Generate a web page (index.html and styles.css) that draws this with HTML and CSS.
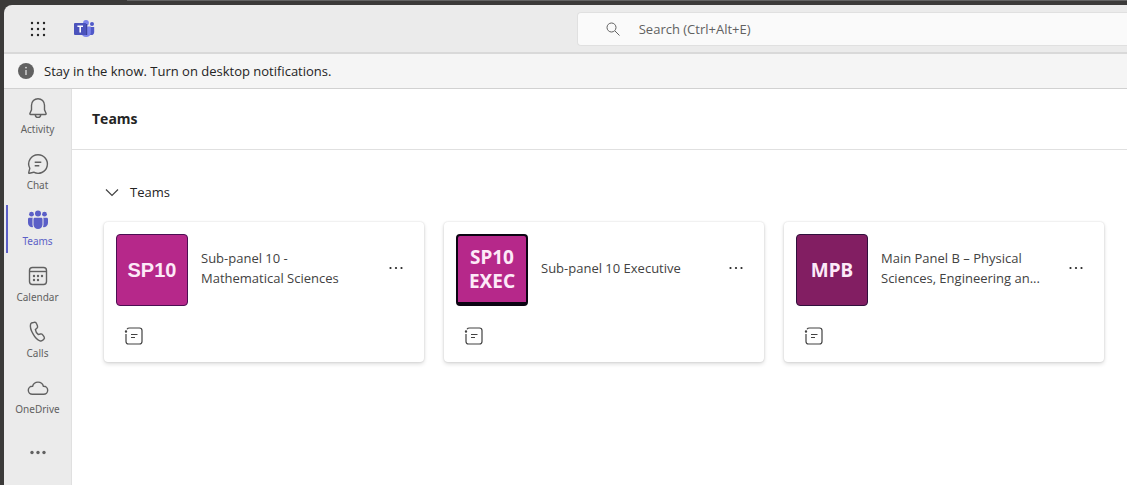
FILE: index.html
```html
<!DOCTYPE html>
<html lang="en">

<head>
    <meta charset="UTF-8">
    <meta name="viewport" content="width=device-width, initial-scale=1.0">
    <title>Teams</title>
    <link rel="stylesheet" href="styles.css">
</head>

<body>
    <!-- shared icons -->
    <svg class="sprite" aria-hidden="true">
        <symbol id="icon-more" viewBox="0 0 20 20">
            <circle cx="4.500" cy="10" r="1.100"/>
            <circle cx="10" cy="10" r="1.100"/>
            <circle cx="15.500" cy="10" r="1.100"/>
        </symbol>
        <symbol id="icon-more-bold" viewBox="0 0 20 20">
            <circle cx="4" cy="9.500" r="1.700"/>
            <circle cx="10" cy="9.500" r="1.700"/>
            <circle cx="16" cy="9.500" r="1.700"/>
        </symbol>
        <symbol id="icon-channel" viewBox="0 0 20 20">
            <path d="M5.500 2h10a2.500 2.500 0 0 1 2.500 2.500v11a2.500 2.500 0 0 1-2.500 2.500h-11A2.500 2.500 0 0 1 2 15.500V8M3 3.200c.5-.8 1.400-1.200 2.500-1.200M7 8.500h6.500M7 11.500h4"/>
            <circle cx="2" cy="5.500" r=".6"/>
        </symbol>
    </svg>

    <div class="app">
        <header class="topbar">
            <div class="brand">
                <button class="icon-btn" type="button" aria-label="App launcher">
                    <svg class="waffle" width="20" height="20" viewBox="0 0 20 20">
                        <circle cx="4" cy="4" r="1.200"/><circle cx="10" cy="4" r="1.200"/><circle cx="16" cy="4" r="1.200"/>
                        <circle cx="4" cy="10" r="1.200"/><circle cx="10" cy="10" r="1.200"/><circle cx="16" cy="10" r="1.200"/>
                        <circle cx="4" cy="16" r="1.200"/><circle cx="10" cy="16" r="1.200"/><circle cx="16" cy="16" r="1.200"/>
                    </svg>
                </button>
                <svg class="logo" width="22" height="20" viewBox="0 0 22 20">
                    <circle cx="18" cy="5" r="2" fill="#5059c9"/>
                    <path d="M14 8h6.200v5a3.100 3.100 0 0 1-6.200 0z" fill="#5059c9"/>
                    <circle cx="12" cy="3.800" r="2.900" fill="#7b83eb"/>
                    <path d="M7.500 7.500h9.300v6.500a4.700 4.700 0 0 1-9.300 0z" fill="#7b83eb"/>
                    <path d="M8 5h5.200v11H8z" fill="#3a4094"/>
                    <rect y="4" width="12.200" height="12" rx="1" fill="#4b53bc"/>
                    <path d="M3.400 7.300h5.600M6.200 7.300v6.200" stroke="#fff" stroke-width="1.600" fill="none"/>
                </svg>
            </div>
            <form class="search" role="search">
                <svg width="16" height="16" viewBox="0 0 16 16">
                    <circle cx="6.500" cy="6.500" r="4.500"/>
                    <path d="M10 10l4.500 4.500"/>
                </svg>
                <input type="search" aria-label="Search" placeholder="Search (Ctrl+Alt+E)">
            </form>
        </header>

        <div class="notice">
            <svg width="16" height="16" viewBox="0 0 16 16">
                <circle cx="8" cy="8" r="8" fill="#616161"/>
                <circle cx="8" cy="4.600" r=".9" fill="#ddd"/>
                <path d="M8 7v5" stroke="#ddd" stroke-width="1.300"/>
            </svg>
            <a href="#">Stay in the know. Turn on desktop notifications.</a>
        </div>

        <div class="content">
            <nav class="rail">
                <a class="rail-item" href="#">
                    <svg width="24" height="24" viewBox="0 0 24 24">
                        <path d="M12 2.700a6.500 6.500 0 0 0-6.500 6.500v4.600l-1.600 3.700c-.2.500.1 1 .7 1h14.800c.6 0 .9-.5.7-1l-1.600-3.700V9.200A6.500 6.500 0 0 0 12 2.700zM9.300 18.700a2.700 2.700 0 0 0 5.400 0"/>
                    </svg>
                    <span>Activity</span>
                </a>
                <a class="rail-item" href="#">
                    <svg width="24" height="24" viewBox="0 0 24 24">
                        <path d="M12 2.700a9.300 9.300 0 1 1-4.300 17.500l-4.300 1.100c-.4.100-.8-.3-.7-.7l1.100-4.300A9.300 9.300 0 0 1 12 2.700zM8.700 10.300h6.600M8.700 13.700h4.600"/>
                    </svg>
                    <span>Chat</span>
                </a>
                <a class="rail-item active" href="#" aria-current="page">
                    <svg width="24" height="24" viewBox="0 0 24 24">
                        <circle cx="12" cy="5.500" r="3"/>
                        <circle cx="5.500" cy="6.200" r="2.400"/>
                        <circle cx="18.500" cy="6.200" r="2.400"/>
                        <path d="M8.800 9.800h6.400c.7 0 1.300.6 1.300 1.300V16.500a4.500 4.500 0 0 1-9 0v-5.400c0-.7.600-1.300 1.300-1.300z"/>
                        <path d="M6.900 9.800c-.3.400-.4.800-.4 1.300V16.500c0 1 .2 1.800.6 2.600A4.200 4.200 0 0 1 2 15v-3.900c0-.7.600-1.300 1.300-1.300z"/>
                        <path d="M17.100 9.800c.3.400.4.800.4 1.300V16.500c0 1-.2 1.800-.6 2.600a4.200 4.200 0 0 0 5.100-4.100v-3.900c0-.7-.6-1.300-1.300-1.300z"/>
                    </svg>
                    <span>Teams</span>
                </a>
                <a class="rail-item" href="#">
                    <svg width="24" height="24" viewBox="0 0 24 24">
                        <rect x="3.500" y="3.500" width="17" height="17" rx="3"/>
                        <path d="M3.500 7.500h17"/>
                        <g class="dots">
                            <circle cx="8" cy="12" r="1.200"/><circle cx="12" cy="12" r="1.200"/><circle cx="16" cy="12" r="1.200"/>
                            <circle cx="8" cy="16" r="1.200"/><circle cx="12" cy="16" r="1.200"/>
                        </g>
                    </svg>
                    <span>Calendar</span>
                </a>
                <a class="rail-item" href="#">
                    <svg width="24" height="24" viewBox="0 0 24 24">
                        <path d="M7.100 2.700l1-.3c1-.3 2 .2 2.400 1.200l.9 2.100c.4.900.2 1.900-.5 2.500l-1.500 1.400c.2 1.700 1.500 3.900 3 5l1.900-.6c.9-.3 1.800 0 2.400.8l1.300 1.800c.6.900.5 2-.2 2.700l-.8.800c-.8.800-2 1.100-3.100.7-2.600-.8-4.900-3.200-7-7.100-2.200-3.900-3-7.100-2.300-9.600.3-.7.900-1.200 1.500-1.400z"/>
                    </svg>
                    <span>Calls</span>
                </a>
                <a class="rail-item" href="#">
                    <svg width="24" height="24" viewBox="0 0 24 24">
                        <path d="M6.400 18.300a4 4 0 0 1-.1-8.100h.3a5.600 5.600 0 0 1 10.800 0h.3a4 4 0 0 1-.1 8.100z"/>
                    </svg>
                    <span>OneDrive</span>
                </a>
                <button class="rail-item" type="button" aria-label="View more apps">
                    <svg class="filled" width="20" height="20"><use href="#icon-more-bold"/></svg>
                </button>
            </nav>

            <main>
                <h1>Teams</h1>

                <section class="teams">
                    <button class="section-toggle" type="button" aria-expanded="true">
                        <svg width="16" height="16" viewBox="0 0 16 16"><path d="M2 5.500l6 6 6-6"/></svg>
                        Teams
                    </button>

                    <div class="cards">
                        <article class="card">
                            <div class="card-head">
                                <div class="avatar">SP10</div>
                                <h2>Sub-panel 10 -<br>Mathematical Sciences</h2>
                                <button class="more" type="button" aria-label="More options">
                                    <svg width="20" height="20"><use href="#icon-more"/></svg>
                                </button>
                            </div>
                            <button class="channel" type="button" aria-label="Assignments">
                                <svg width="20" height="20"><use href="#icon-channel"/></svg>
                            </button>
                        </article>

                        <article class="card">
                            <div class="card-head">
                                <div class="avatar exec">SP10<br>EXEC</div>
                                <h2>Sub-panel 10 Executive</h2>
                                <button class="more" type="button" aria-label="More options">
                                    <svg width="20" height="20"><use href="#icon-more"/></svg>
                                </button>
                            </div>
                            <button class="channel" type="button" aria-label="Assignments">
                                <svg width="20" height="20"><use href="#icon-channel"/></svg>
                            </button>
                        </article>

                        <article class="card">
                            <div class="card-head">
                                <div class="avatar main-panel">MPB</div>
                                <h2>Main Panel B – Physical<br>Sciences, Engineering an...</h2>
                                <button class="more" type="button" aria-label="More options">
                                    <svg width="20" height="20"><use href="#icon-more"/></svg>
                                </button>
                            </div>
                            <button class="channel" type="button" aria-label="Assignments">
                                <svg width="20" height="20"><use href="#icon-channel"/></svg>
                            </button>
                        </article>
                    </div>
                </section>
            </main>
        </div>
    </div>
</body>

</html>
```

FILE: styles.css
```css
* {
    margin: 0;
    padding: 0;
    box-sizing: border-box;
}

body {
    font-family: "Segoe UI", "Open Sans", "Noto Sans", sans-serif;
    font-size: 13px;
    line-height: 20px;
    color: #242424;
    background: #3b3a39;
    min-height: 100vh;
    display: flex;
    padding: 5px 0 0 4px;
}

button,
input {
    font: inherit;
    color: inherit;
    background: none;
    border: none;
}

button {
    cursor: pointer;
}

a {
    color: inherit;
    text-decoration: none;
}

svg {
    display: block;
    flex: none;
}

.sprite {
    position: absolute;
    width: 0;
    height: 0;
}

/* browser tab edge above the app */
body::before {
    content: "";
    position: absolute;
    top: 0;
    left: 127px;
    right: 0;
    height: 1px;
    background: #636363;
}

.app {
    flex: 1;
    min-width: 0;
    display: flex;
    flex-direction: column;
    background: #ebebeb;
    border-top-left-radius: 8px;
    overflow: hidden;
}

/* top bar */
.topbar {
    display: flex;
    align-items: center;
    height: 49px;
    border-bottom: 2px solid #d9d9d9;
}

.brand {
    flex: 1;
    display: flex;
    align-items: center;
    gap: 26px;
    padding-left: 24px;
}

.waffle {
    fill: #242424;
}

.search {
    flex: 0 0 49%;
    display: flex;
    align-items: center;
    gap: 18px;
    height: 34px;
    padding-left: 27px;
    background: #fafafa;
    border: 1px solid #e0e0e0;
    border-right: none;
    border-radius: 4px 0 0 4px;
}

.search svg {
    fill: none;
    stroke: #616161;
}

.search input {
    flex: 1;
    outline: none;
}

.search input::placeholder {
    color: #616161;
    opacity: 1;
}

/* notification strip */
.notice {
    display: flex;
    align-items: center;
    gap: 10px;
    height: 35px;
    padding-left: 14px;
    background: #f5f5f5;
    border-bottom: 1px solid #d1d1d1;
}

.content {
    flex: 1;
    display: flex;
}

/* left rail */
.rail {
    width: 68px;
    display: flex;
    flex-direction: column;
    gap: 8px;
    padding: 4px 2px;
    border-right: 1px solid #e0e0e0;
}

.rail-item {
    height: 48px;
    display: flex;
    flex-direction: column;
    align-items: center;
    justify-content: center;
    border: 2px solid transparent;
    border-width: 0 2px;
    color: #616161;
    font-family: "Segoe UI", "Noto Sans", sans-serif;
    font-size: 10px;
    line-height: 18px;
}

.rail-item svg {
    fill: none;
    stroke: currentColor;
    stroke-width: 1.4;
}

.rail-item.active {
    color: #5b5fc7;
    border-left-color: #5b5fc7;
}

.rail-item .filled,
.rail-item .dots,
.rail-item.active svg {
    fill: currentColor;
    stroke: none;
}

/* main area */
main {
    flex: 1;
    min-width: 0;
    background: #fff;
}

h1 {
    padding: 20px;
    font-size: 14px;
    font-weight: 700;
    line-height: 20px;
    border-bottom: 1px solid #e0e0e0;
}

.teams {
    padding: 32px;
}

.section-toggle {
    display: flex;
    align-items: center;
    gap: 10px;
}

.section-toggle svg {
    fill: none;
    stroke: #424242;
    stroke-width: 1.2;
}

.cards {
    display: grid;
    grid-template-columns: repeat(auto-fill, 320px);
    gap: 20px;
    margin-top: 20px;
    margin-right: -20px;
}

.card {
    height: 140px;
    padding: 12px;
    border-radius: 4px;
    box-shadow: 0 0 2px rgba(0, 0, 0, 0.16), 0 2px 4px rgba(0, 0, 0, 0.14);
}

.card-head {
    display: flex;
    align-items: center;
}

.avatar {
    width: 72px;
    height: 72px;
    display: flex;
    align-items: center;
    justify-content: center;
    background: #b6288a;
    border: 1px solid #4b0f52;
    border-radius: 4px;
    color: #fdeaf8;
    font-family: "Liberation Sans", Arial, sans-serif;
    font-size: 20px;
    font-weight: 700;
    line-height: 24px;
    text-align: center;
}

.avatar.exec {
    border: 2px solid #0b0412;
    border-bottom-width: 4px;
    font-family: "Noto Sans", sans-serif;
    font-size: 19px;
}

.avatar.main-panel {
    background: #821e62;
    border-color: #30103c;
    font-family: "Noto Sans", sans-serif;
    font-size: 19px;
}

.card h2 {
    flex: 1;
    margin-left: 13px;
    margin-bottom: 4px;
    font-size: 13px;
    font-weight: 400;
    line-height: 20px;
    color: #424242;
    white-space: nowrap;
}

.more {
    padding: 6px;
    margin-bottom: 4px;
    fill: #242424;
}

.channel {
    display: block;
    margin-top: 14px;
    padding: 6px 8px;
    fill: none;
    stroke: #424242;
    stroke-width: 1.2;
}
```
